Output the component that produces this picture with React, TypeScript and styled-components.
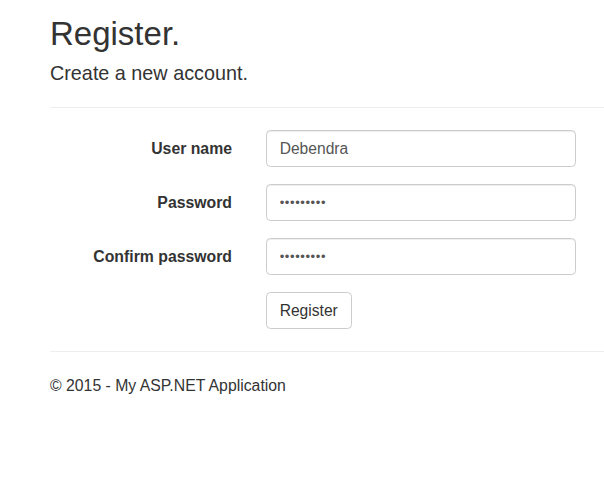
import React from "react";
import styled, { createGlobalStyle } from "styled-components";

const GlobalStyle = createGlobalStyle`
  html, body {
    margin: 0;
    padding: 0;
    background: #fff;
  }
  body {
    font-family: "Liberation Sans", Arial, sans-serif;
    color: #333;
  }
`;

const Page = styled.div`
  padding: 16px 0 0 50px;
  width: 604px;
  box-sizing: border-box;
`;

const Title = styled.h2`
  margin: 0 0 11px;
  font-size: 33px;
  font-weight: 500;
  line-height: 1.1;
`;

const Subtitle = styled.h4`
  margin: 0;
  font-size: 19.8px;
  font-weight: 500;
  line-height: 1.1;
`;

const Rule = styled.hr<{ $after?: number }>`
  margin: 22px 0 ${props => props.$after ?? 22}px;
  border: 0;
  border-top: 1px solid #eee;
`;

const Form = styled.form`
  display: flex;
  flex-direction: column;
  gap: 17px;
`;

const Row = styled.div`
  display: grid;
  grid-template-columns: 182px 310px;
  column-gap: 33.5px;
  align-items: center;
`;

const Label = styled.label`
  text-align: right;
  font-size: 15.8px;
  font-weight: 700;
  line-height: 22px;
`;

const Input = styled.input`
  grid-column: 2;
  height: 37px;
  box-sizing: border-box;
  padding: 6.6px 13.2px;
  font-family: "Liberation Sans", Arial, sans-serif;
  font-size: 15.6px;
  color: #555;
  background: #fff;
  border: 1px solid #ccc;
  border-radius: 4.4px;
  box-shadow: inset 0 1px 1px rgba(0, 0, 0, 0.075);
  outline: none;

  &[type="password"] {
    font-size: 13px;
    letter-spacing: 0.6px;
  }
`;

const Button = styled.button`
  grid-column: 2;
  justify-self: start;
  height: 37px;
  padding: 6.6px 13.2px;
  font-family: "Liberation Sans", Arial, sans-serif;
  font-size: 15.6px;
  color: #333;
  background: #fff;
  border: 1px solid #ccc;
  border-radius: 4.4px;
  cursor: pointer;
`;

const Footer = styled.footer`
  font-size: 15.8px;
  line-height: 22px;
`;

const fields = [
  { id: "user", label: "User name", type: "text", value: "Debendra" },
  { id: "pass", label: "Password", type: "password", value: "debendra1" },
  { id: "confirm", label: "Confirm password", type: "password", value: "debendra1" },
];

const App = () => {
  return (
    <Page>
      <GlobalStyle />
      <Title>Register.</Title>
      <Subtitle>Create a new account.</Subtitle>
      <Rule />
      <Form onSubmit={e => e.preventDefault()}>
        {fields.map(f => (
          <Row key={f.id}>
            <Label htmlFor={f.id}>{f.label}</Label>
            <Input id={f.id} type={f.type} defaultValue={f.value} />
          </Row>
        ))}
        <Row>
          <Button type="submit">Register</Button>
        </Row>
      </Form>
      <Rule $after={23} />
      <Footer>© 2015 - My ASP.NET Application</Footer>
    </Page>
  );
};

export default App;
